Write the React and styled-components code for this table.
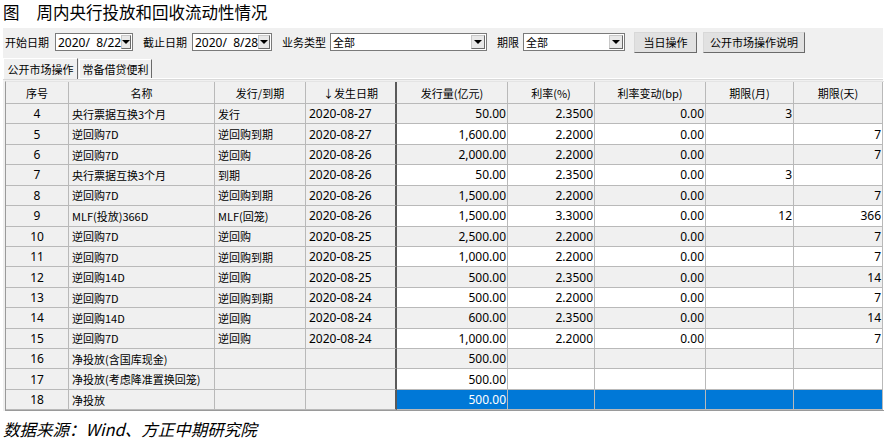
import styled, { createGlobalStyle, css } from 'styled-components';

const GlobalStyle = createGlobalStyle`
    body {
        margin: 0;
        background: #ffffff;
        font-family: "Noto Sans", "Noto Sans CJK SC", sans-serif;
    }
`;

const COLS = '63px 146px 91px 91px 111px 87px 111px 88px 89px';

const Page = styled.div`
    width: 894px;
    height: 444px;
    overflow: hidden;
`;

const Title = styled.div`
    height: 28px;
    padding-left: 3px;
    font-family: "Noto Sans CJK SC", sans-serif;
    font-size: 16.5px;
    line-height: 24px;
    color: #000;
    display: flex;
    gap: 17px;
`;

const Window = styled.div`
    margin-left: 3px;
    width: 880px;
    background: #f0f0f0;
    font-size: 12px;
    color: #000;
`;

const Toolbar = styled.div`
    height: 28px;
    display: flex;
    align-items: center;
    padding-left: 2px;
`;

const Label = styled.span`
    font-family: "Noto Sans CJK SC", sans-serif;
    font-size: 11px;
    margin: 0 ${p => p.$mr || 4}px 0 ${p => p.$first ? 0 : 10}px;
    white-space: nowrap;
`;

const Combo = styled.div`
    width: ${p => p.$w}px;
    height: 18px;
    box-sizing: border-box;
    background: #fff;
    border: 1px solid #7a7a7a;
    display: flex;
    align-items: center;
    justify-content: space-between;
    padding-left: 2px;
    font-size: 12px;
    white-space: pre;
`;

const ComboText = styled.span`
    font-family: "Noto Sans CJK SC", sans-serif;
    font-size: 11px;
`;

const DropButton = styled.div`
    width: 14px;
    height: 14px;
    margin-right: 1px;
    box-sizing: border-box;
    background: #e8e8e8;
    border: 1px solid #c8c8c8;
    border-right-color: #6a6a6a;
    border-bottom-color: #6a6a6a;
    display: flex;
    align-items: center;
    justify-content: center;
    &::after {
        content: '';
        border-left: 4px solid transparent;
        border-right: 4px solid transparent;
        border-top: 4px solid #000;
    }
`;

const Button = styled.div`
    width: ${p => p.$w}px;
    height: 21px;
    box-sizing: border-box;
    margin-left: ${p => p.$ml || 6}px;
    background: #e1e1e1;
    border: 1px solid #d8d8d8;
    border-right-color: #6a6a6a;
    border-bottom-color: #6a6a6a;
    display: flex;
    align-items: center;
    justify-content: center;
    font-family: "Noto Sans CJK SC", sans-serif;
    font-size: 11px;
`;

const TabStrip = styled.div`
    height: 22px;
    display: flex;
    align-items: flex-end;
    border-bottom: 1px solid #ffffff;
    box-shadow: 0 1px 0 #d9d9d9;
`;

const Tab = styled.div`
    width: ${p => p.$w}px;
    height: ${p => p.$active ? 21 : 19}px;
    box-sizing: border-box;
    margin-left: ${p => p.$active ? 0 : 1}px;
    border: 1px solid #fff;
    border-right-color: #6a6a6a;
    border-bottom: none;
    margin-bottom: ${p => p.$active ? -1 : 0}px;
    background: #f0f0f0;
    display: flex;
    align-items: center;
    justify-content: center;
    font-family: "Noto Sans CJK SC", sans-serif;
    font-size: 11px;
    position: relative;
`;

const Grid = styled.div`
    margin: 2px 0 0 2px;
    width: 878px;
    border-left: 1px solid #9a9a9a;
    border-top: 1px solid #e4e4e4;
    border-bottom: 1px solid #9a9a9a;
`;

const Row = styled.div`
    display: grid;
    grid-template-columns: ${COLS};
    height: ${p => p.$head ? 22 : 20.43}px;
`;

const Cell = styled.div`
    box-sizing: border-box;
    border-right: 1px solid #b9b9b9;
    border-bottom: 1px solid #b9b9b9;
    display: flex;
    align-items: center;
    padding: 0 3px;
    white-space: nowrap;
    overflow: hidden;
    font-size: 12px;
    background: #f0f0f0;
    justify-content: ${p => p.$align === 'right' ? 'flex-end' : p.$align === 'center' ? 'center' : 'flex-start'};
    ${p => p.$align === 'right' && css`padding-right: 1px;`}
    ${p => p.$cjk && css`font-family: "Noto Sans CJK SC", sans-serif; font-size: 11px;`}
    ${p => p.$split && css`border-right: 2px solid #5a5a5a;`}
    ${p => p.$white && css`background: #ffffff;`}
    ${p => p.$sel && css`background: #0078d7; color: #ffffff;`}
`;

const HeadCell = styled(Cell)`
    justify-content: center;
    font-family: "Noto Sans CJK SC", sans-serif;
    font-size: 11px;
    padding: 0;
`;

const Caption = styled.div`
    margin-top: 6px;
    padding-left: 3px;
    font-family: "Noto Sans CJK SC", sans-serif;
    font-size: 16.5px;
    font-style: italic;
    color: #000;
`;

const headers = ['序号', '名称', '发行/到期', '↓发生日期', '发行量(亿元)', '利率(%)', '利率变动(bp)', '期限(月)', '期限(天)'];

const rows = [
    ['4', '央行票据互换3个月', '发行', '2020-08-27', '50.00', '2.3500', '0.00', '3', ''],
    ['5', '逆回购7D', '逆回购到期', '2020-08-27', '1,600.00', '2.2000', '0.00', '', '7'],
    ['6', '逆回购7D', '逆回购', '2020-08-26', '2,000.00', '2.2000', '0.00', '', '7'],
    ['7', '央行票据互换3个月', '到期', '2020-08-26', '50.00', '2.3500', '0.00', '3', ''],
    ['8', '逆回购7D', '逆回购到期', '2020-08-26', '1,500.00', '2.2000', '0.00', '', '7'],
    ['9', 'MLF(投放)366D', 'MLF(回笼)', '2020-08-26', '1,500.00', '3.3000', '0.00', '12', '366'],
    ['10', '逆回购7D', '逆回购', '2020-08-25', '2,500.00', '2.2000', '0.00', '', '7'],
    ['11', '逆回购7D', '逆回购到期', '2020-08-25', '1,000.00', '2.2000', '0.00', '', '7'],
    ['12', '逆回购14D', '逆回购', '2020-08-25', '500.00', '2.3500', '0.00', '', '14'],
    ['13', '逆回购7D', '逆回购到期', '2020-08-24', '500.00', '2.2000', '0.00', '', '7'],
    ['14', '逆回购14D', '逆回购', '2020-08-24', '600.00', '2.3500', '0.00', '', '14'],
    ['15', '逆回购7D', '逆回购', '2020-08-24', '1,000.00', '2.2000', '0.00', '', '7'],
    ['16', '净投放(含国库现金)', '', '', '500.00', '', '', '', ''],
    ['17', '净投放(考虑降准置换回笼)', '', '', '500.00', '', '', '', ''],
    ['18', '净投放', '', '', '500.00', '', '', '', ''],
];

const SELECTED = '18';

const App = () => {
    return (
        <Page>
            <GlobalStyle />
            <Title>
                <span>图</span>
                <span>周内央行投放和回收流动性情况</span>
            </Title>
            <Window>
                <Toolbar>
                    <Label $first $mr={6}>开始日期</Label>
                    <Combo $w={78}>2020/  8/22<DropButton /></Combo>
                    <Label $mr={5}>截止日期</Label>
                    <Combo $w={80}>2020/  8/28<DropButton /></Combo>
                    <Label>业务类型</Label>
                    <Combo $w={157}><ComboText>全部</ComboText><DropButton /></Combo>
                    <Label>期限</Label>
                    <Combo $w={102}><ComboText>全部</ComboText><DropButton /></Combo>
                    <Button $ml={9} $w={63}>当日操作</Button>
                    <Button $w={102}>公开市场操作说明</Button>
                </Toolbar>
                <TabStrip>
                    <Tab $active $w={75}>公开市场操作</Tab>
                    <Tab $w={73}>常备借贷便利</Tab>
                </TabStrip>
                <Grid>
                    <Row $head>
                        {headers.map((h, i) => (
                            <HeadCell key={h} $split={i === 3}>{h}</HeadCell>
                        ))}
                    </Row>
                    {rows.map((r, idx) => {
                        const sel = r[0] === SELECTED;
                        const white = idx % 2 === 1;
                        return (
                            <Row key={r[0]}>
                                {r.map((v, i) => (
                                    <Cell
                                        key={i}
                                        $align={i === 0 ? 'center' : i >= 4 ? 'right' : 'left'}
                                        $cjk={i === 1 || i === 2}
                                        $split={i === 3}
                                        $white={i >= 4 && white}
                                        $sel={i >= 4 && sel}
                                    >
                                        {v}
                                    </Cell>
                                ))}
                            </Row>
                        );
                    })}
                </Grid>
            </Window>
            <Caption>数据来源：Wind、方正中期研究院</Caption>
        </Page>
    );
};

export default App;
